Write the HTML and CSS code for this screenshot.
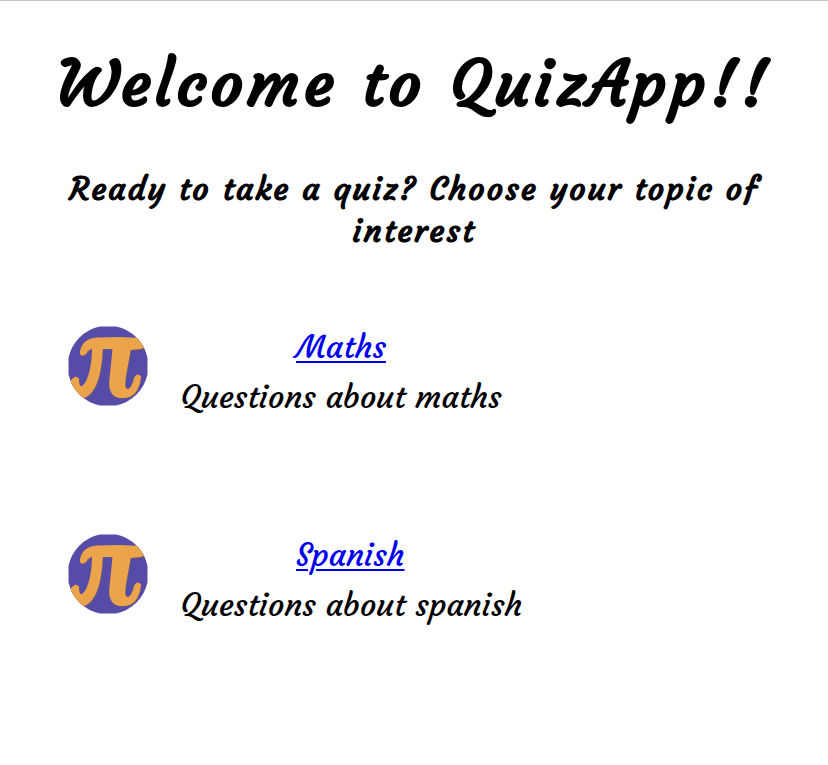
FILE: index.html
```html
<!DOCTYPE html>
<html lang="en">
<head>
  <meta charset="utf-8">
  <meta name="viewport" content="width=device-width, initial-scale=1">
  <title>QuizApp</title>
  <link rel="stylesheet" href="styles.css">
</head>
<body>
  <svg class="defs" aria-hidden="true">
    <defs>
      <clipPath id="disc"><path d="M32 0.500H48A40.300 40.300 0 0 1 79.500 32V48A40.300 40.300 0 0 1 48 79.500H32A40.300 40.300 0 0 1 0.500 48V32A40.300 40.300 0 0 1 32 0.500Z"/></clipPath>
      <path id="pi-shape" d="M12 25C14 17 19 12 29 11.500L52 11L73 12L84 9V19Q74 24 62.500 24C61 36 56 56 57.500 61C60 66 64 61 66 52Q69 46 73 50C72 63 66 72 56 72C44 73 40 65 41.500 53L44.500 23H34.700C34 43 30 66 17 71.500L8 76L-2 60L5 52Q9 49 11 53C11 62 14 62 18 55C22 47 24 34 24 22.500Q20 24 18 28Q14 31 12 28Z"/>
      <g id="pi" clip-path="url(#disc)">
        <rect width="80" height="80" fill="#564ba6"/>
        <use href="#pi-shape" fill="#756070" transform="translate(0.600 0.800)"/>
        <use href="#pi-shape" fill="#eba44a"/>
      </g>
    </defs>
  </svg>

  <header class="intro">
    <h1 class="title">Welcome to QuizApp!!</h1>
    <h2 class="subtitle">Ready to take a quiz? Choose your topic of interest</h2>
  </header>

  <main class="topics">
    <article class="topic">
      <svg class="topic-icon" viewBox="0 0 80 80" role="img" aria-label="Pi"><use href="#pi"/></svg>
      <div class="topic-text">
        <a class="topic-link" href="#maths">Maths</a>
        <p class="topic-description">Questions about maths</p>
      </div>
    </article>
    <article class="topic">
      <svg class="topic-icon" viewBox="0 0 80 80" role="img" aria-label="Pi"><use href="#pi"/></svg>
      <div class="topic-text">
        <a class="topic-link" href="#spanish">Spanish</a>
        <p class="topic-description">Questions about spanish</p>
      </div>
    </article>
  </main>
</body>
</html>
```
FILE: styles.css
```css
* { box-sizing: border-box; }

body {
  margin: 0;
  border-top: 1px solid #c8c8c8;
  background: #fff;
  color: #000;
  font-family: Courgette, Lato, sans-serif;
}

.defs {
  position: absolute;
  width: 0;
  height: 0;
}

.intro {
  padding: 43px 32px 0;
  text-align: center;
}

.title {
  margin: 0;
  font-size: 64px;
  line-height: 80px;
  letter-spacing: 4px;
}

.subtitle {
  margin: 44px 0 0;
  font-size: 32px;
  line-height: 42px;
  letter-spacing: 2px;
}

.topics {
  display: grid;
  gap: 108px;
  padding: 70px 68px;
}

.topic {
  display: flex;
  gap: 32px;
}

.topic-icon {
  flex: none;
  width: 80px;
  height: 80px;
  margin-top: 4px;
}

.topic-text {
  display: flex;
  flex-direction: column;
  align-items: flex-start;
  font-size: 32px;
  line-height: 50px;
}

.topic-link {
  margin-left: 116px;
  color: #00e;
  text-decoration-thickness: 2px;
  text-underline-offset: 3px;
}

.topic-description { margin: 0; }
```
